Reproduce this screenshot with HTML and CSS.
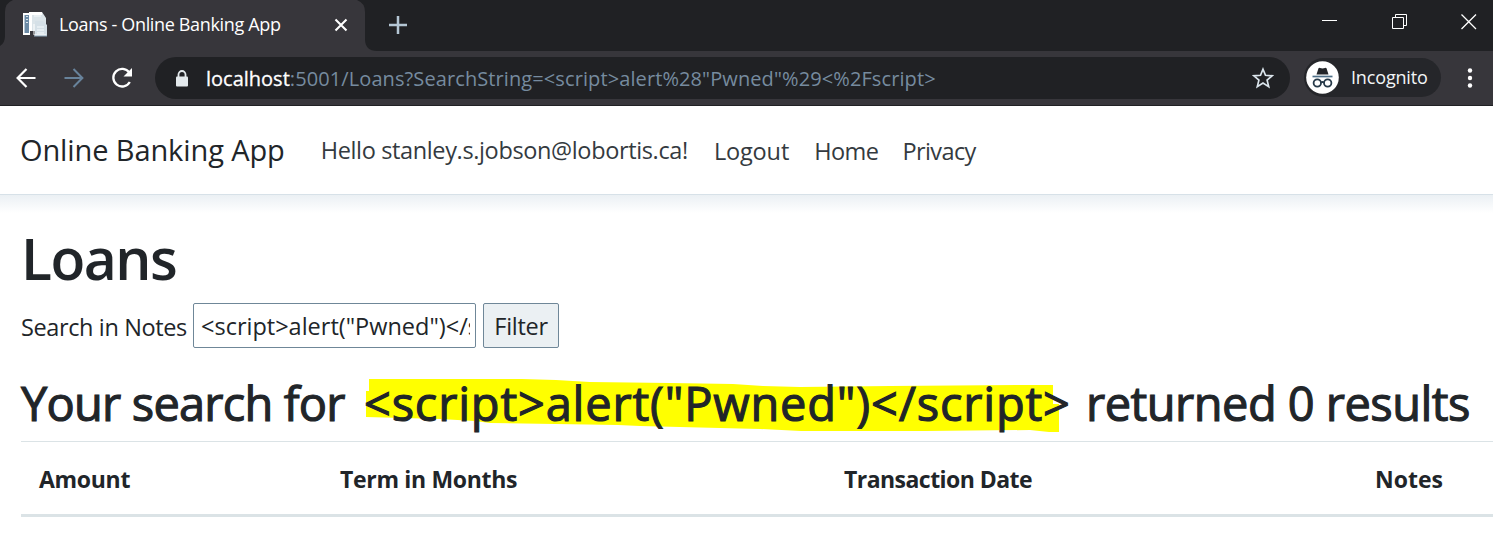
FILE: index.html
```
<!DOCTYPE html>
<html lang="en">
<head>
<meta charset="utf-8">
<title>Loans - Online Banking App</title>
<link rel="stylesheet" href="styles.css">
</head>
<body>
<header class="chrome">
  <div class="strip">
    <svg class="tab-shape" width="380" height="51" viewBox="0 0 380 51"><path d="M0 51V46Q5 43 5 36V12Q5 3 13 0H357Q365 3 365 12V39Q365 51 377 51Z"/></svg>
    <div class="tab">
      <svg class="favicon" width="26" height="26" viewBox="0 0 26 26">
        <path d="M1 1H8V23H1Z" fill="#fff"/><path d="M2.500 3H7V21H2.500Z" fill="#6b8aa5"/><path d="M4 4.500H6M4 7.500H6M4 10.500H6" stroke="#dbe4ea"/>
        <path d="M7 0H20L24 6V19H7Z" fill="#dbe4e9"/><path d="M7 0H20V3H10V19H7Z" fill="#fff"/>
        <path d="M13 9H21L25 13V24H13Z" fill="#d5e0e7"/><path d="M12 12V23H24" fill="none" stroke="#fff"/><path d="M12 4H19M15 15H22M15 18H22M15 21H22" stroke="#f6fafc"/><path d="M12 24H25" stroke="#8fa8bb"/>
      </svg>
      <span class="tab-title">Loans - Online Banking App</span>
      <svg class="tab-close" width="14" height="14" viewBox="0 0 14 14"><path d="M1.500 1.500L12.500 12.500M12.500 1.500L1.500 12.500" stroke="#fff" stroke-width="2.1"/></svg>
    </div>
    <svg class="new-tab" width="18" height="18" viewBox="0 0 18 18"><path d="M9 0V18M0 9H18" stroke="#b4c6d4" stroke-width="2.500"/></svg>
    <div class="window-controls">
      <svg width="16" height="16" viewBox="0 0 16 16"><path d="M0 7.500H15" stroke="#fff"/></svg>
      <svg width="16" height="16" viewBox="0 0 16 16"><path d="M.5 3.500H11.500V14.500H.5ZM3.500 3.500V.5H14.500V11.500H11.500" fill="none" stroke="#fff"/></svg>
      <svg width="16" height="16" viewBox="0 0 16 16"><path d="M.5 .5L15 15M15 .5L.5 15" stroke="#fff" stroke-width="1.3"/></svg>
    </div>
  </div>
  <div class="toolbar">
    <svg class="back" width="20" height="20" viewBox="0 0 20 20"><path d="M19.500 10H2M10.500 1L1.600 10L10.500 19" fill="none" stroke="#fff" stroke-width="2.2"/></svg>
    <svg class="forward" width="20" height="20" viewBox="0 0 20 20"><path d="M.5 10H18M9.500 1L18.400 10L9.500 19" fill="none" stroke="#68839b" stroke-width="2"/></svg>
    <svg class="reload" width="22" height="22" viewBox="0 0 22 22"><path d="M18.300 5.600A8.800 8.800 0 1 0 18.800 15" fill="none" stroke="#fff" stroke-width="2.300"/><path d="M21 1V9.500H12.500Z" fill="#fff"/></svg>
    <div class="omnibox">
      <svg class="lock" width="14" height="17" viewBox="0 0 14 17"><path d="M3.500 7V4.500A3.300 3.300 0 0 1 10.500 4.500V7" fill="none" stroke="#e3e9ec" stroke-width="1.800"/><rect x="1" y="6.500" width="12" height="10" rx="1" fill="#e3e9ec"/></svg>
      <span class="host">localhost</span><span class="path">:5001/Loans?SearchString=&lt;script&gt;alert%28"Pwned"%29&lt;%2Fscript&gt;</span>
      <svg class="star" width="22" height="22" viewBox="0 0 22 22"><path d="M11 2.200L13.500 8.300L20.100 8.800L15.100 13.100L16.700 19.600L11 16.100L5.300 19.600L6.900 13.100L1.900 8.800L8.500 8.300Z" fill="none" stroke="#dce6ed" stroke-width="1.700"/></svg>
    </div>
    <div class="incognito">
      <svg width="33" height="33" viewBox="0 0 33 33"><circle cx="16.500" cy="16.500" r="16.300" fill="#fff"/><path d="M10.500 13.500L12.500 7.300Q13 6.500 14 7L16.500 7.500L19 7Q20 6.500 20.500 7.300L22.500 13.500Z" fill="#222428"/><path d="M6.500 15.500H26.500" stroke="#4f6f88" stroke-width="1.700"/><g fill="none" stroke="#263949" stroke-width="1.800"><circle cx="11.300" cy="22" r="3.700"/><circle cx="21.700" cy="22" r="3.700"/><path d="M15 21.500Q16.500 20.500 18 21.500"/></g></svg>
      <span>Incognito</span>
    </div>
    <svg class="menu" width="6" height="20" viewBox="0 0 6 20"><g fill="#fff"><circle cx="3" cy="2.500" r="2.200"/><circle cx="3" cy="10" r="2.200"/><circle cx="3" cy="17.500" r="2.200"/></g></svg>
  </div>
</header>
<nav class="navbar">
  <span class="brand">Online Banking App</span>
  <span class="hello">Hello stanley.s.jobson@lobortis.ca!</span>
  <a class="logout">Logout</a>
  <a class="home">Home</a>
  <a class="privacy">Privacy</a>
</nav>
<div class="nav-shadow"></div>
<main class="page">
  <h1>Loans</h1>
  <form class="search">
    <label for="q">Search in Notes</label>
    <input class="field" id="q" type="text" value="&lt;script&gt;alert(&quot;Pwned&quot;)&lt;/script&gt;">
    <button type="button">Filter</button>
  </form>
  <h2>
    <span class="lead">Your search for</span>
    <span class="term"><svg class="marker" width="710" height="64" viewBox="364 370 710 64"><path d="M369 379H522L556 380L590 382L670 383L733 384L763 386L800 387L890 386L1017 385H1053V404H1059V432H1049L1030 430L925 431H801L760 429L720 428L640 426L618 425L490 423L475 421L440 419L366 417V391H369Z" fill="#ff0"/></svg>&lt;script&gt;alert("Pwned")&lt;/script&gt;</span>
    <span class="tail">returned 0 results</span>
  </h2>
  <div class="table-head">
    <span class="c1">Amount</span><span class="c2">Term in Months</span><span class="c3">Transaction Date</span><span class="c4">Notes</span>
  </div>
</main>
</body>
</html>
```
FILE: styles.css
```
* { box-sizing: border-box; }
body {
  margin: 0;
  width: 1493px;
  height: 535px;
  overflow: hidden;
  background: #fff;
  color: #212529;
  font-family: "Open Sans", "Noto Sans", sans-serif;
  white-space: nowrap;
}
svg { display: block; flex: none; }

.chrome { height: 106px; background: #37363b; border-bottom: 1px solid #202124; }
.strip { position: relative; display: flex; height: 51px; background: #202124; }
.tab-shape { position: absolute; left: 0; top: 0; fill: #37363b; }
.tab { position: relative; display: flex; align-items: center; width: 365px; height: 50px; padding-left: 22px; }
.tab-title { width: 275px; margin-left: 11px; padding-bottom: 2px; color: #fff; font-size: 18px; letter-spacing: -0.34px; }
.new-tab { margin: 16px 0 0 24px; }
.window-controls { display: flex; gap: 53px; margin: 14px 16px 0 auto; }
.window-controls svg:first-child { margin: -1px 1px 0 0; }

.toolbar { display: flex; align-items: center; height: 54px; padding-left: 16px; }
.forward { margin-left: 28px; }
.reload { margin-left: 27px; }
.omnibox { display: flex; align-items: center; width: 1135px; height: 42px; margin-left: 22px; padding-left: 20px; border-radius: 21px; background: #202124; font-size: 20px; line-height: 42px; }
.host { margin: 2px 0 0 17px; color: #fff; -webkit-text-stroke: 0.3px #fff; }
.path { margin-top: 2px; color: #768b9f; letter-spacing: 0.1px; }
.star { margin: 0 16px 0 auto; }
.incognito { display: flex; align-items: center; width: 137px; height: 39px; margin: -1px 0 0 14px; padding-left: 2px; border-radius: 20px; background: #25262a; color: #f2f5f7; font-size: 18px; letter-spacing: -0.16px; }
.incognito span { margin: -1px 0 0 12px; }
.menu { margin-left: 26px; }

.navbar { display: flex; align-items: center; height: 89px; padding-left: 20px; border-bottom: 1px solid #d7e1e8; color: #343a40; font-size: 23.5px; line-height: 34px; }
.brand { color: #212529; font-size: 29px; letter-spacing: -0.11px; }
.hello { margin: -1px 0 0 36px; letter-spacing: -0.36px; }
.navbar a { margin-top: 2px; }
.logout { margin-left: 26px; letter-spacing: -0.14px; }
.home { margin-left: 25px; letter-spacing: -0.5px; }
.privacy { margin-left: 24px; letter-spacing: -0.62px; }
.nav-shadow { height: 18px; background: linear-gradient(#ebf0f4, #fff); }

.page { padding-left: 21px; }
h1 { margin: 15px 0 0; height: 60px; font-size: 57px; line-height: 60px; font-weight: 600; letter-spacing: -1.5px; }
.search { display: flex; margin-top: 15px; height: 45px; font-size: 23.5px; }
.search label { width: 172px; line-height: 49px; letter-spacing: -0.38px; }
.field { width: 283px; padding: 0 5px 0 7px; border: 1px solid #6f8798; border-radius: 2px; background: #fff; color: #212529; font: 23.5px "Open Sans", sans-serif; outline: none; }
.search button { width: 76px; margin-left: 7px; padding: 2px 0 0; border: 1px solid #6f8798; border-radius: 2px; background: #ebf0f3; color: #212529; font: 23.5px/41px "Open Sans", sans-serif; letter-spacing: -0.3px; }

h2 { position: relative; z-index: 0; display: flex; height: 64px; margin: 22px 0 0; font-size: 47px; line-height: 66px; font-weight: 400; -webkit-text-stroke: 1.1px #212529; }
.lead { width: 343px; letter-spacing: -0.8px; }
.term { position: relative; width: 722px; letter-spacing: 0.8px; }
.marker { position: absolute; left: 0; top: 0; z-index: -1; -webkit-text-stroke: 0; }
.tail { letter-spacing: -0.53px; }

.table-head { display: grid; grid-template-columns: 301px 504px 531px 1fr; height: 76px; margin-top: 7px; padding-left: 18px; border-top: 1px solid #dbe3e6; border-bottom: 3px solid #dbe3e6; font-size: 23px; line-height: 75px; font-weight: 700; }
.c1 { letter-spacing: -0.3px; }
.c2 { letter-spacing: -0.32px; }
.c3 { letter-spacing: -0.54px; }
.c4 { letter-spacing: 0; }
```
